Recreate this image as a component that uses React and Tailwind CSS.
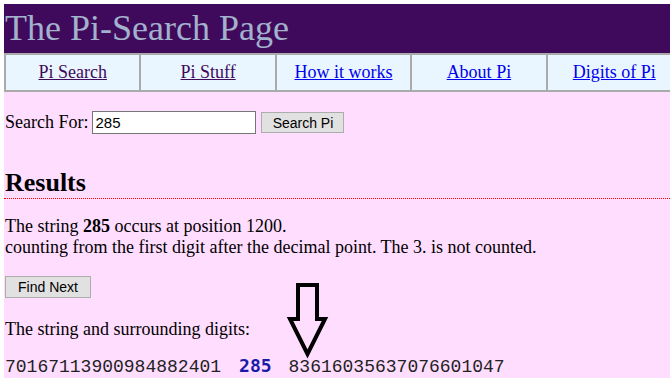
import React, { useState } from 'react';

const navLinks = [
  { label: 'Pi Search', visited: true },
  { label: 'Pi Stuff', visited: true },
  { label: 'How it works', visited: false },
  { label: 'About Pi', visited: false },
  { label: 'Digits of Pi', visited: false },
];

function DownArrow() {
  return (
    <svg
      className="absolute left-[282px] top-[276px]"
      width="45"
      height="82"
      viewBox="0 0 45 82"
    >
      <path
        d="M12 5 H31 V39 H39 L21.5 74 L4 39 H12 Z"
        fill="none"
        stroke="#000"
        strokeWidth="4"
        strokeLinejoin="miter"
      />
    </svg>
  );
}

export default function App() {
  const [query, setQuery] = useState('285');

  return (
    <div className="w-[670px] h-[378px] overflow-hidden bg-white pl-1 pt-1 font-['Liberation_Serif',serif] text-[18px] leading-[21px] text-black">
      <div className="relative h-full bg-[#ffddff]">
        <div className="h-[49px] bg-[#400a5c] pl-px text-[36px] leading-[49px] text-[#a3b2cc]">
          The Pi-Search Page
        </div>

        <div className="grid w-[677px] grid-cols-5 h-[39px] border-y-2 border-[#aaaaaa] bg-[#eaf6ff]">
          {navLinks.map((l) => (
            <div
              key={l.label}
              className="flex items-center justify-center border-l-2 border-[#aaaaaa]"
            >
              <a
                href="#"
                className={'underline ' + (l.visited ? 'text-[#400a5c]' : 'text-[#0000ee]')}
              >
                {l.label}
              </a>
            </div>
          ))}
        </div>

        <form className="mt-[19px] flex items-center" onSubmit={(e) => e.preventDefault()}>
          <span className="ml-px">Search For:</span>
          <input
            value={query}
            onChange={(e) => setQuery(e.target.value)}
            className="ml-[4px] h-[23px] w-[164px] border border-[#767676] bg-white px-[2px] font-['Liberation_Sans',sans-serif] text-[15px] outline-none"
          />
          <button
            type="submit"
            className="ml-[5px] h-[21px] w-[83px] border border-[#adadad] bg-[#e1e1e1] font-['Liberation_Sans',sans-serif] text-[14px] leading-none"
          >
            Search Pi
          </button>
        </form>

        <h2 className="mt-[34px] border-b border-dotted border-[#ff0000] pl-px text-[26px] font-bold leading-[30px]">
          Results
        </h2>

        <div className="mt-[17px] pl-px">
          <div>
            The string <b>285</b> occurs at position 1200.
          </div>
          <div>counting from the first digit after the decimal point. The 3. is not counted.</div>
        </div>

        <button className="mt-[18px] ml-px block h-[22px] w-[86px] border border-[#adadad] bg-[#e1e1e1] font-['Liberation_Sans',sans-serif] text-[14px] leading-none">
          Find Next
        </button>

        <div className="mt-[21px] pl-px">The string and surrounding digits:</div>

        <div className="mt-[15px] flex items-baseline pl-px font-['Liberation_Mono',monospace] text-[#222222]">
          <span>70167113900984882401</span>
          <span className="ml-[18px] mr-[17px] font-['DejaVu_Sans_Mono',monospace] text-[18px] font-bold text-[#1a1aa8]">
            285
          </span>
          <span>83616035637076601047</span>
        </div>

        <DownArrow />
      </div>
    </div>
  );
}
